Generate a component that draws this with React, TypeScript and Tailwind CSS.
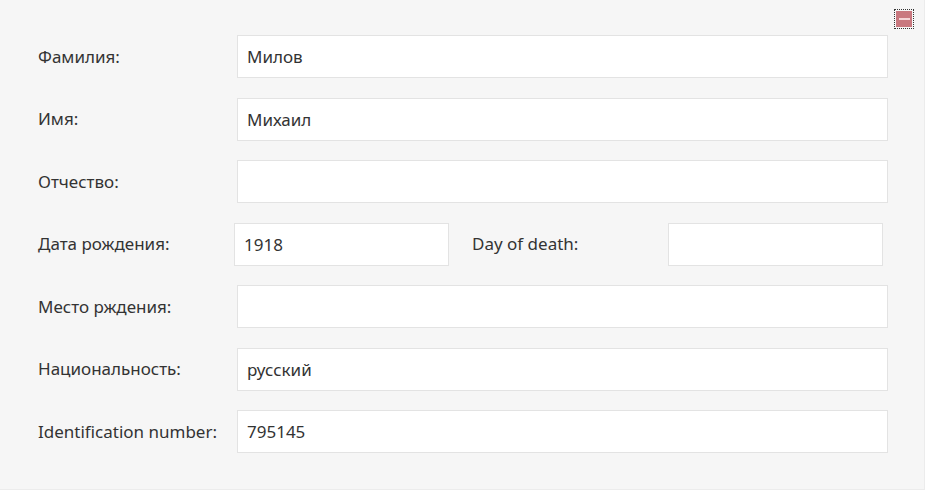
const rows = [
  { label: "Фамилия:", value: "Милов" },
  { label: "Имя:", value: "Михаил" },
  { label: "Отчество:", value: "" },
];

const rowsAfter = [
  { label: "Место рждения:", value: "" },
  { label: "Национальность:", value: "русский" },
  { label: "Identification number:", value: "795145" },
];

function Field({ label, value }: { label: string; value: string }) {
  return (
    <div className="flex items-center">
      <label className="w-[199px] shrink-0">{label}</label>
      <input
        readOnly
        value={value}
        className="h-[43px] w-[651px] border border-[#e3e3e3] bg-white px-[9px] text-[#333] outline-none"
      />
    </div>
  );
}

export default function App() {
  return (
    <div className="h-[492px] w-[927px] bg-white">
      <div
        className="relative flex h-[490px] w-[925px] flex-col gap-[19.5px] border-r border-b border-[#ececec] bg-[#f6f6f6] pt-[35px] pl-[38px] text-[17px] text-[#333]"
        style={{ fontFamily: '"Noto Sans", "Open Sans", sans-serif' }}
      >
        <button className="absolute top-[9px] right-[10px] flex h-[20px] w-[20px] items-center justify-center border border-dotted border-[#333]">
          <span className="flex h-[16px] w-[16px] items-center justify-center bg-[#c9787f]">
            <span className="h-[2px] w-[11px] bg-[#f4d4d6]" />
          </span>
        </button>

        {rows.map((r) => (
          <Field key={r.label} {...r} />
        ))}

        <div className="flex items-center">
          <label className="w-[196px] shrink-0">Дата рождения:</label>
          <input
            readOnly
            value="1918"
            className="h-[43px] w-[215px] border border-[#e3e3e3] bg-white px-[9px] text-[#333] outline-none"
          />
          <label className="ml-[23px] w-[196px] shrink-0">Day of death:</label>
          <input
            readOnly
            value=""
            className="h-[43px] w-[215px] border border-[#e3e3e3] bg-white px-[9px] outline-none"
          />
        </div>

        {rowsAfter.map((r) => (
          <Field key={r.label} {...r} />
        ))}
      </div>
    </div>
  );
}
